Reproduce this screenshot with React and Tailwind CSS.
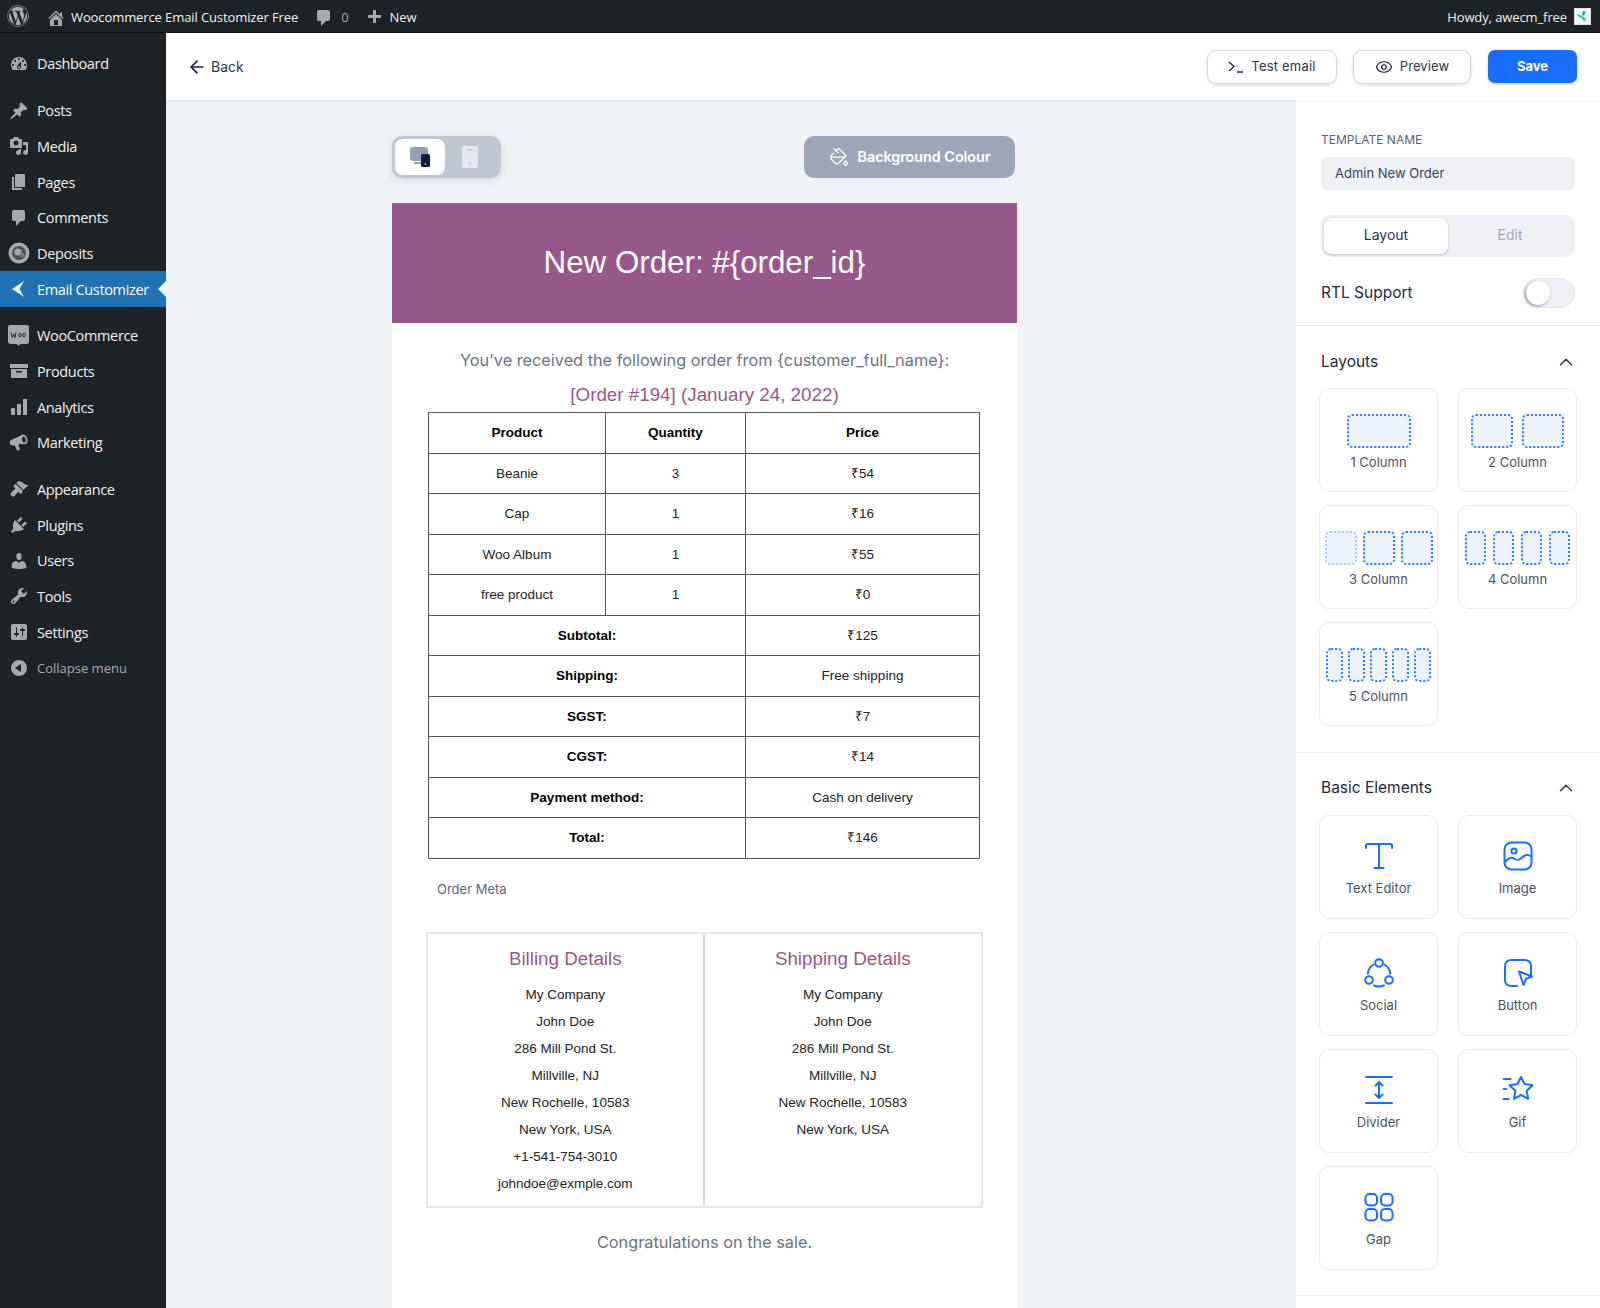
import React from 'react';
import { ArrowLeft, ChevronUp, Eye, PaintBucket } from 'lucide-react';
import { FaWordpress } from 'react-icons/fa';

const dash = {
  dashboard: 'M3.76 16h12.48c1.1-1.37 1.76-3.11 1.76-5 0-4.42-3.58-8-8-8s-8 3.58-8 8c0 1.89.66 3.63 1.76 5zM10 4c.55 0 1 .45 1 1s-.45 1-1 1-1-.45-1-1 .45-1 1-1zM6 6c.55 0 1 .45 1 1s-.45 1-1 1-1-.45-1-1 .45-1 1-1zm8 0c.55 0 1 .45 1 1s-.45 1-1 1-1-.45-1-1 .45-1 1-1zm-5.37 5.55L12 7v6c0 1.1-.9 2-2 2s-2-.9-2-2c0-.57.24-1.08.63-1.45zM4 10c.55 0 1 .45 1 1s-.45 1-1 1-1-.45-1-1 .45-1 1-1zm12 0c.55 0 1 .45 1 1s-.45 1-1 1-1-.45-1-1 .45-1 1-1zm-5 3c0-.55-.45-1-1-1s-1 .45-1 1 .45 1 1 1 1-.45 1-1z',
  post: 'M10.44 3.02l1.82-1.82 6.36 6.35-1.83 1.82c-1.05-.68-2.48-.57-3.41.36l-.75.75c-.92.93-1.04 2.35-.35 3.41l-1.83 1.82-2.41-2.41-2.8 2.79c-.42.42-3.38 2.71-3.8 2.29s1.86-3.39 2.28-3.81l2.79-2.79L4.1 9.36l1.83-1.82c1.05.69 2.48.57 3.4-.36l.75-.75c.93-.92 1.05-2.35.36-3.41z',
  media: 'M13 11V4c0-.55-.45-1-1-1h-1.67L9 1H5L3.67 3H2c-.55 0-1 .45-1 1v7c0 .55.45 1 1 1h10c.55 0 1-.45 1-1zM7 4.5c1.38 0 2.5 1.12 2.5 2.5S8.38 9.5 7 9.5 4.5 8.38 4.5 7 5.62 4.5 7 4.5zM14 6h5v10.5c0 1.38-1.12 2.5-2.5 2.5S14 17.88 14 16.5s1.12-2.5 2.5-2.5c.17 0 .34.02.5.05V9h-3V6zm-4 8.05V13h2v3.5c0 1.38-1.12 2.5-2.5 2.5S7 17.88 7 16.5 8.12 14 9.5 14c.17 0 .34.02.5.05z',
  page: 'M6 15V2h10v13H6zm-1 1h8v2H3V5h2v11z',
  comment: 'M5 2h9c1.1 0 2 .9 2 2v7c0 1.1-.9 2-2 2h-2l-5 5v-5H5c-1.1 0-2-.9-2-2V4c0-1.1.9-2 2-2z',
  back: 'M15 2 3 10l12 8-4.500-8z',
  products: 'M1 3h18v4H1zM2 8h16v9H2zM7 10v1.500h6V10z',
  analytics: 'M18 18V2h-4v16h4zm-6 0V7H8v11h4zm-6 0v-7H2v7h4z',
  marketing: 'M15.500 2.500c1.900 0 3.500 2.400 3.500 5.200 0 2.900-1.500 5-3.500 4.800L9.800 11l-.9 1.300.9 4.200-3.200.7-1.200-5.600-2.200-.5C1.800 10.800 1 9.700 1 8.300c0-1.300.8-2.500 2.200-2.800zM15.500 4.500c-1 0-1.800 1.500-1.800 3.300s.8 3.200 1.800 3.200 1.800-1.400 1.800-3.200-.8-3.300-1.800-3.300z',
  appearance: 'M14.480 11.060L7.410 3.990l1.500-1.500c.5-.56 2.300-.47 3.510.32 1.210.8 1.430 1.280 2.910 2.100 1.180.64 2.450 1.260 4.450.85zm-.71.71L6.700 4.700 4.930 6.470c-.39.39-.39 1.020 0 1.410l1.060 1.060c.39.39.39 1.030 0 1.420-.6.6-1.430 1.110-2.210 1.690-.35.26-.7.53-1.010.84C1.430 13.730.99 15.240 2.380 16.630c1.390 1.390 2.900.95 3.740-.01.31-.31.58-.66.84-1.010.58-.78 1.090-1.610 1.690-2.210.39-.39 1.020-.39 1.410 0l1.060 1.060c.39.39 1.020.39 1.410 0z',
  plugins: 'M13.110 4.360L9.870 7.600 8 5.730l3.240-3.240c.35-.34 1.050-.2 1.560.32.52.51.66 1.210.31 1.550zm-8 1.770l.91-1.120 9.010 9.010-1.190.84c-.71.71-2.630 1.160-3.820 1.160H6.140L4.900 17.260c-.59.59-1.540.59-2.120 0-.59-.58-.59-1.530 0-2.120l1.240-1.240v-3.880c0-1.130.4-3.190 1.090-3.890zm7.260 3.970l3.240-3.240c.34-.35 1.040-.21 1.550.31.52.51.66 1.210.31 1.550l-3.240 3.250z',
  users: 'M10 9.250c-2.270 0-2.730-3.440-2.730-3.440C7 4.020 7.820 2 9.970 2c2.160 0 2.980 2.020 2.710 3.810 0 0-.41 3.440-2.680 3.440zm0 2.570L12.720 10c2.390 0 4.520 2.330 4.520 4.530v2.490s-3.650 1.130-7.240 1.130c-3.650 0-7.240-1.130-7.240-1.130v-2.490c0-2.250 1.940-4.480 4.470-4.480z',
  tools: 'M16.680 9.770c-1.340 1.340-3.300 1.670-4.950.99l-5.410 6.520c-.99.99-2.590.99-3.580 0s-.99-2.590 0-3.570l6.520-5.420c-.68-1.650-.35-3.610.99-4.950 1.280-1.280 3.120-1.620 4.720-1.060l-2.890 2.890 2.820 2.820 2.860-2.870c.53 1.580.18 3.390-1.080 4.650zM3.810 16.210c.4.39 1.040.39 1.430 0 .4-.4.4-1.040 0-1.430-.39-.4-1.030-.4-1.430 0-.39.39-.39 1.030 0 1.430z',
  settings: 'M18 16V4c0-1.100-.9-2-2-2H4c-1.100 0-2 .9-2 2v12c0 1.100.9 2 2 2h12c1.100 0 2-.9 2-2zM8 11h1c.55 0 1 .45 1 1s-.45 1-1 1H8v1.500c0 .28-.22.5-.5.5s-.5-.22-.5-.5V13H6c-.55 0-1-.45-1-1s.45-1 1-1h1V5.500c0-.28.22-.5.5-.5s.5.22.5.5V11zm5-2h-1c-.55 0-1-.45-1-1s.45-1 1-1h1V5.500c0-.28.22-.5.5-.5s.5.22.5.5V7h1c.55 0 1 .45 1 1s-.45 1-1 1h-1v5.500c0 .28-.22.5-.5.5s-.5-.22-.5-.5V9z',
  collapse: 'M10 2a8 8 0 1 0 0 16 8 8 0 0 0 0-16zm2 4v8L6 10z',
  home: 'M16 8.500l1.530 1.530-1.060 1.060L10 4.620l-6.470 6.470-1.060-1.060L10 2.500l4 4v-2h2v4zm-6-2.460l6 5.990V18H4v-5.970zM12 17v-5H8v5h4z',
  plus: 'M17 7v3h-5v5H9v-5H4V7h5V2h3v5h5z',
};

function Dash({ name, className }) {
  return (
    <svg viewBox="0 0 20 20" className={className} fill="currentColor">
      <path d={dash[name]} fillRule="evenodd" />
    </svg>
  );
}

function WooIcon() {
  return (
    <svg viewBox="0 0 20 20" className="w-[21px] h-[21px] text-[#a7aaad]">
      <path d="M2 0h16a2 2 0 0 1 2 2v14a2 2 0 0 1-2 2h-6l-2 2-1.500-2H2a2 2 0 0 1-2-2V2a2 2 0 0 1 2-2z" fill="currentColor" />
      <path d="M3 7l1 5 1.300-3.500L6.600 12l1-5M10.200 9.500a1.200 1.800 0 1 0 2.400 0 1.200 1.800 0 1 0-2.400 0M14.200 9.500a1.200 1.800 0 1 0 2.400 0 1.200 1.800 0 1 0-2.400 0" fill="none" stroke="#1d2327" strokeWidth="0.9" />
    </svg>
  );
}

function DepositIcon() {
  return (
    <svg viewBox="0 0 22 22" className="w-[22px] h-[22px]">
      <circle cx="11" cy="11" r="10.500" fill="#a7aaad" />
      <circle cx="11" cy="11" r="7" fill="#4b5054" />
      <circle cx="10" cy="10" r="3.500" fill="#a7aaad" />
      <circle cx="14" cy="13" r="2.300" fill="#7c8084" />
    </svg>
  );
}

function NavItem({ icon, label, active, muted, className = '' }) {
  return (
    <div className={`relative flex items-center h-[35.7px] ${active ? 'bg-[#2271b1] text-white' : muted ? 'text-[#a7aaad]' : 'text-[#f0f0f1]'} ${className}`}>
      <span className={`flex justify-center w-[37px] ${active ? 'text-[#f0f0f1]' : 'text-[#a7aaad]'}`}>
        {icon === 'woo' && <WooIcon />}
        {icon === 'deposit' && <DepositIcon />}
        {icon !== 'woo' && icon !== 'deposit' && (
          <Dash name={icon} className={icon === 'marketing' ? 'w-[20px] h-[20px] -rotate-12' : 'w-[20px] h-[20px]'} />
        )}
      </span>
      <span className={muted ? 'text-[13px] pt-[2px]' : 'text-[14.500px] tracking-[-0.35px] pt-[1px]'}>{label}</span>
      {active && <span className="absolute right-0 top-1/2 -mt-[8px] border-y-[8px] border-y-transparent border-r-[8px] border-r-[#eff2f7]" />}
    </div>
  );
}

function Sidebar() {
  return (
    <aside className="w-[166px] shrink-0 bg-[#1d2327] pt-[13px] font-['Open_Sans',sans-serif]">
      <NavItem icon="dashboard" label="Dashboard" />
      <NavItem icon="post" label="Posts" className="mt-[11px]" />
      <NavItem icon="media" label="Media" />
      <NavItem icon="page" label="Pages" />
      <NavItem icon="comment" label="Comments" />
      <NavItem icon="deposit" label="Deposits" />
      <NavItem icon="back" label="Email Customizer" active />
      <NavItem icon="woo" label="WooCommerce" className="mt-[11px]" />
      <NavItem icon="products" label="Products" />
      <NavItem icon="analytics" label="Analytics" />
      <NavItem icon="marketing" label="Marketing" />
      <NavItem icon="appearance" label="Appearance" className="mt-[11px]" />
      <NavItem icon="plugins" label="Plugins" />
      <NavItem icon="users" label="Users" />
      <NavItem icon="tools" label="Tools" />
      <NavItem icon="settings" label="Settings" />
      <NavItem icon="collapse" label="Collapse menu" muted />
    </aside>
  );
}

function AdminBar() {
  return (
    <div className="h-[33px] shrink-0 bg-[#1d2327] border-b border-[#0b0e10] flex items-center pt-[3px] pl-[7px] pr-[9px] text-[13px] text-[#f0f0f1] font-['Open_Sans',sans-serif] tracking-[-0.1px]">
      <FaWordpress className="w-[22px] h-[22px] text-[#a7aaad] -mt-[3px]" />
      <Dash name="home" className="ml-[17px] w-[20px] h-[20px] text-[#a7aaad]" />
      <span className="ml-[5px]">Woocommerce Email Customizer Free</span>
      <Dash name="comment" className="ml-[16px] w-[20px] h-[20px] text-[#a7aaad]" />
      <span className="ml-[7px] text-[#a7aaad]">0</span>
      <Dash name="plus" className="ml-[15px] w-[20px] h-[20px] text-[#a7aaad]" />
      <span className="ml-[6px]">New</span>
      <span className="ml-auto">Howdy, awecm_free</span>
      <span className="ml-[7px] -mt-[3px] w-[17px] h-[17px] bg-[#f4f8f8] border border-[#dfe3e3] flex items-center justify-center">
        <svg viewBox="0 0 16 16" className="w-[13px] h-[13px]">
          <path d="M9 1l3 1-2 5-3-1z" fill="#19a0d8" />
          <path d="M3 5l5 3-2 2-4-3zM8 8l5 3-3 3-3-4z" fill="#1cc7a6" />
        </svg>
      </span>
    </div>
  );
}

function TopActions() {
  return (
    <div className="h-[67px] shrink-0 bg-white shadow-[0_1px_2px_rgba(30,40,70,0.08)] z-10 relative flex items-center pl-[21px] pr-[23px] text-[#2b3350]">
      <ArrowLeft className="w-[20px] h-[20px] text-[#1a2142]" strokeWidth={2} />
      <span className="ml-[4px] text-[14px]">Back</span>
      <button className="ml-auto w-[130px] h-[34px] rounded-[9px] border border-[#d3d7de] shadow-[0_1px_3px_rgba(30,40,70,0.18)] flex items-center justify-center gap-[7px] text-[13px] tracking-[0.2px]">
        <svg viewBox="0 0 16 12" className="w-[16px] h-[12px]" fill="none" stroke="#1a2142" strokeWidth="1.300">
          <path d="M1 1l5 4.500L1 10M9 11h6" />
        </svg>
        Test email
      </button>
      <button className="ml-[16px] w-[118px] h-[34px] rounded-[9px] border border-[#d3d7de] shadow-[0_1px_3px_rgba(30,40,70,0.18)] flex items-center justify-center gap-[7px] text-[13px] tracking-[0.1px]">
        <Eye className="w-[18px] h-[18px] text-[#1a2142]" strokeWidth={1.600} />
        Preview
      </button>
      <button className="ml-[17px] w-[89px] h-[33px] rounded-[7px] bg-[#1a6dff] shadow-[0_1px_3px_rgba(30,70,170,0.3)] text-white text-[13px] font-bold">Save</button>
    </div>
  );
}

const itemRows = [
  ['Beanie', '3', '₹54'],
  ['Cap', '1', '₹16'],
  ['Woo Album', '1', '₹55'],
  ['free product', '1', '₹0'],
];
const totalRows = [
  ['Subtotal:', '₹125'],
  ['Shipping:', 'Free shipping'],
  ['SGST:', '₹7'],
  ['CGST:', '₹14'],
  ['Payment method:', 'Cash on delivery'],
  ['Total:', '₹146'],
];
const address = ['My Company', 'John Doe', '286 Mill Pond St.', 'Millville, NJ', 'New Rochelle, 10583', 'New York, USA'];

function OrderTable() {
  const cell = 'border border-[#555] h-[40.500px] p-0 pt-[1px] text-center';
  return (
    <table className="mt-[3px] ml-[36px] w-[551px] table-fixed border-collapse text-[13.500px] text-[#222] font-['Liberation_Sans',sans-serif]">
      <colgroup>
        <col className="w-[177px]" />
        <col className="w-[140px]" />
        <col className="w-[234px]" />
      </colgroup>
      <tbody>
        <tr className="font-bold text-black">
          <td className={cell}>Product</td>
          <td className={cell}>Quantity</td>
          <td className={cell}>Price</td>
        </tr>
        {itemRows.map((row) => (
          <tr key={row[0]}>
            {row.map((v, i) => <td key={i} className={cell}>{v}</td>)}
          </tr>
        ))}
        {totalRows.map((row) => (
          <tr key={row[0]}>
            <td colSpan={2} className={`${cell} font-bold text-black`}>{row[0]}</td>
            <td className={cell}>{row[1]}</td>
          </tr>
        ))}
      </tbody>
    </table>
  );
}

function AddressCol({ title, lines, className = '' }) {
  return (
    <div className={`pt-[13px] text-center font-['Liberation_Sans',sans-serif] ${className}`}>
      <h3 className="text-[18.800px] leading-[24px] text-[#96588a] mb-[10px]">{title}</h3>
      {lines.map((l) => <p key={l} className="text-[13.500px] leading-[27.100px] text-[#222]">{l}</p>)}
    </div>
  );
}

function Canvas() {
  return (
    <div className="flex-1 bg-[#eff2f7] pl-[226px] pt-[36px] overflow-hidden">
      <div className="w-[625px]">
        <div className="flex items-center justify-between h-[42px] pr-[2px]">
          <div className="w-[109px] h-[42px] rounded-[10px] bg-[#bfc7d3] p-[3px] flex shadow-[0_2px_6px_rgba(60,70,100,0.15)]">
            <span className="w-[50px] h-[36px] rounded-[8px] bg-white flex items-center justify-center">
              <svg viewBox="0 0 22 22" className="w-[22px] h-[22px]">
                <rect x="1" y="1" width="18" height="14" rx="3" fill="#969fb1" />
                <rect x="5" y="16" width="8" height="2" fill="#969fb1" />
                <rect x="12" y="8" width="9" height="13" rx="1.500" fill="#111b45" />
                <circle cx="16.500" cy="18" r="0.800" fill="#fff" />
              </svg>
            </span>
            <span className="flex-1 flex items-center justify-center pr-[3px]">
              <svg viewBox="0 0 16 22" className="w-[16px] h-[22px]">
                <rect x="0" y="0" width="16" height="22" rx="2.500" fill="#e4e8ee" />
                <rect x="5.500" y="3" width="5" height="1.300" fill="#bfc7d3" />
                <circle cx="8" cy="17.500" r="1.300" fill="#bfc7d3" />
              </svg>
            </span>
          </div>
          <button className="w-[211px] h-[42px] pb-[1px] rounded-[10px] bg-[#9da6b7] text-white text-[14.300px] font-semibold flex items-center justify-center gap-[9px]">
            <PaintBucket className="w-[20px] h-[20px] mt-[1px]" strokeWidth={1.500} />
            Background Colour
          </button>
        </div>

        <div className="mt-[25px] h-[120px] bg-[#96588a] flex items-center justify-center text-white text-[31.300px] font-['Liberation_Sans',sans-serif]">
          New Order: #&#123;order_id&#125;
        </div>

        <div className="bg-white h-[1000px] pt-[25px]">
          <p className="text-center text-[16.300px] leading-[24px] text-[#6b7280]">You’ve received the following order from &#123;customer_full_name&#125;:</p>
          <p className="mt-[9px] text-center text-[18.800px] leading-[28px] text-[#96588a] font-['Liberation_Sans',sans-serif]">[Order #194] (January 24, 2022)</p>
          <OrderTable />
          <p className="mt-[21px] ml-[45px] text-[13px] leading-[18px] text-[#5f6673]">Order Meta</p>
          <div className="mt-[34px] mx-auto w-[557px] h-[276px] grid grid-cols-2 border-2 border-[#e5e5e5]">
            <AddressCol title="Billing Details" lines={[...address, '+1-541-754-3010', 'johndoe@exmple.com']} className="border-r-2 border-[#d8d8d8]" />
            <AddressCol title="Shipping Details" lines={address} />
          </div>
          <p className="mt-[22px] text-center text-[16.300px] leading-[24px] text-[#6b7280]">Congratulations on the sale.</p>
        </div>
      </div>
    </div>
  );
}

function Slots({ count, w, gap, faded }) {
  return (
    <div className="h-[34px] flex justify-center" style={{ gap }}>
      {Array.from({ length: count }).map((_, i) => (
        <span
          key={i}
          className={`h-[34px] rounded-[5px] border-2 border-dotted bg-[#edf3fe] ${faded && i === 0 ? 'border-[#a5c4fb]' : 'border-[#2e7bfb]'}`}
          style={{ width: w }}
        />
      ))}
    </div>
  );
}

function Card({ label, children }) {
  return (
    <div className="h-[104px] rounded-[10px] border border-[#e9ebef] pt-[25px] flex flex-col items-center">
      {children}
      <span className="mt-[5px] text-[13px] leading-[18px] text-[#4a5163]">{label}</span>
    </div>
  );
}

const stroke = { fill: 'none', stroke: '#1a6dff', strokeWidth: 2, strokeLinecap: 'round', strokeLinejoin: 'round' };

const icons = {
  text: <path d="M3 8V5.500C3 4.700 3.700 4 4.500 4h23c.8 0 1.500.7 1.500 1.500V8M16 4v24M11.500 28h9" {...stroke} />,
  image: (
    <g {...stroke}>
      <rect x="2.500" y="2.500" width="27" height="27" rx="7" />
      <circle cx="12" cy="11" r="2.600" />
      <path d="M3 22c4-4 6-5.500 9-3.500s5 2 8-1 6-3.500 9.500-1" />
    </g>
  ),
  social: (
    <g {...stroke}>
      <circle cx="16" cy="6" r="3.800" />
      <circle cx="6" cy="23" r="3.800" />
      <circle cx="26" cy="23" r="3.800" />
      <path d="M10.500 7.500C7 10 5 13.500 4.800 16.500M21.500 7.500C25 10 27 13.500 27.200 16.500M11 28.500c3 1.200 7 1.200 10 0" />
    </g>
  ),
  button: (
    <g {...stroke}>
      <path d="M15 29H9.500C5.500 29 3 26.500 3 22.500v-13C3 5.500 5.500 3 9.500 3h13C26.500 3 29 5.500 29 9.500V19" />
      <path d="M17 14.500l13 5-6 2.200-2.500 6.300z" />
    </g>
  ),
  divider: (
    <g {...stroke}>
      <path d="M3 3h26M3 29h26M16 8v16M12.500 11.500 16 8l3.500 3.500M12.500 20.500 16 24l3.500-3.500" />
    </g>
  ),
  gif: (
    <g {...stroke}>
      <path d="M19 3l3.500 7 8 1.200-5.800 5.600 1.400 8-7.100-3.800-7.100 3.800 1.400-8-5.800-5.600 8-1.200z" />
      <path d="M1.500 5h7M1.500 15h2.500M1.500 25h5" />
    </g>
  ),
  gap: (
    <g {...stroke}>
      <rect x="2.500" y="3" width="11.500" height="11.500" rx="4" />
      <rect x="18" y="3" width="11.500" height="11.500" rx="4" />
      <rect x="2.500" y="18" width="11.500" height="11.500" rx="4" />
      <rect x="18" y="18" width="11.500" height="11.500" rx="4" />
    </g>
  ),
};

function ElementCard({ icon, label }) {
  return (
    <div className="h-[104px] rounded-[10px] border border-[#e9ebef] pt-[24px] flex flex-col items-center">
      <svg viewBox="0 0 32 32" className="w-[32px] h-[32px]">{icons[icon]}</svg>
      <span className="mt-[7px] text-[13px] leading-[18px] text-[#4a5163]">{label}</span>
    </div>
  );
}

function SectionHead({ title }) {
  return (
    <div className="flex items-center justify-between pl-[2px] h-[20px] text-[15.500px] text-[#1f2740]">
      {title}
      <ChevronUp className="w-[22px] h-[22px] text-[#2b3350]" strokeWidth={1.600} />
    </div>
  );
}

function SidePanel() {
  return (
    <aside className="w-[304px] shrink-0 bg-white overflow-hidden">
      <div className="px-[25px] pt-[32px] pb-[17px] border-b border-[#e8e9ed]">
        <label className="block text-[12px] leading-[16px] text-[#5b6272]">TEMPLATE NAME</label>
        <div className="mt-[9px] h-[33px] w-[254px] rounded-[6px] bg-[#eef0f5] pl-[14px] flex items-center text-[13px] text-[#3b4258]">Admin New Order</div>
        <div className="mt-[25px] h-[42px] w-[254px] rounded-[10px] bg-[#eef0f5] p-[3px] flex text-[14px]">
          <span className="w-[124px] h-[36px] pb-[3px] rounded-[8px] bg-white shadow-[0_1px_3px_rgba(30,40,70,0.25)] flex items-center justify-center text-[#2b3350]">Layout</span>
          <span className="flex-1 flex items-center justify-center pb-[3px] text-[#a3a9b6]">Edit</span>
        </div>
        <div className="mt-[21px] h-[30px] w-[254px] flex items-center justify-between">
          <span className="text-[15.500px] text-[#1f2740]">RTL Support</span>
          <span className="w-[52px] h-[30px] rounded-full bg-[#eef0f5] border border-[#e2e5eb] p-[2px] flex items-center">
            <span className="w-[24px] h-[24px] rounded-full bg-white shadow-[-1px_1px_3px_rgba(30,40,70,0.5)]" />
          </span>
        </div>
      </div>

      <div className="px-[23px] pt-[26px] pb-[26px] border-b border-[#e8e9ed]">
        <SectionHead title="Layouts" />
        <div className="mt-[16px] grid grid-cols-2 gap-x-[20px] gap-y-[13px]">
          <Card label="1 Column"><Slots count={1} w={64} gap={0} /></Card>
          <Card label="2 Column"><Slots count={2} w={42} gap={9} /></Card>
          <Card label="3 Column"><Slots count={3} w={32} gap={6} faded /></Card>
          <Card label="4 Column"><Slots count={4} w={21} gap={7} /></Card>
          <Card label="5 Column"><Slots count={5} w={17} gap={5} /></Card>
        </div>
      </div>

      <div className="px-[23px] pt-[25px] pb-[25px] border-b border-[#e8e9ed]">
        <SectionHead title="Basic Elements" />
        <div className="mt-[17px] grid grid-cols-2 gap-x-[20px] gap-y-[13px]">
          <ElementCard icon="text" label="Text Editor" />
          <ElementCard icon="image" label="Image" />
          <ElementCard icon="social" label="Social" />
          <ElementCard icon="button" label="Button" />
          <ElementCard icon="divider" label="Divider" />
          <ElementCard icon="gif" label="Gif" />
          <ElementCard icon="gap" label="Gap" />
        </div>
      </div>
    </aside>
  );
}

export default function App() {
  return (
    <div className="w-[1600px] h-[1308px] overflow-hidden flex flex-col bg-[#1d2327] font-['Inter',sans-serif]">
      <AdminBar />
      <div className="flex-1 flex min-h-0">
        <Sidebar />
        <div className="flex-1 flex flex-col min-w-0">
          <TopActions />
          <div className="flex-1 flex min-h-0">
            <Canvas />
            <SidePanel />
          </div>
        </div>
      </div>
    </div>
  );
}
